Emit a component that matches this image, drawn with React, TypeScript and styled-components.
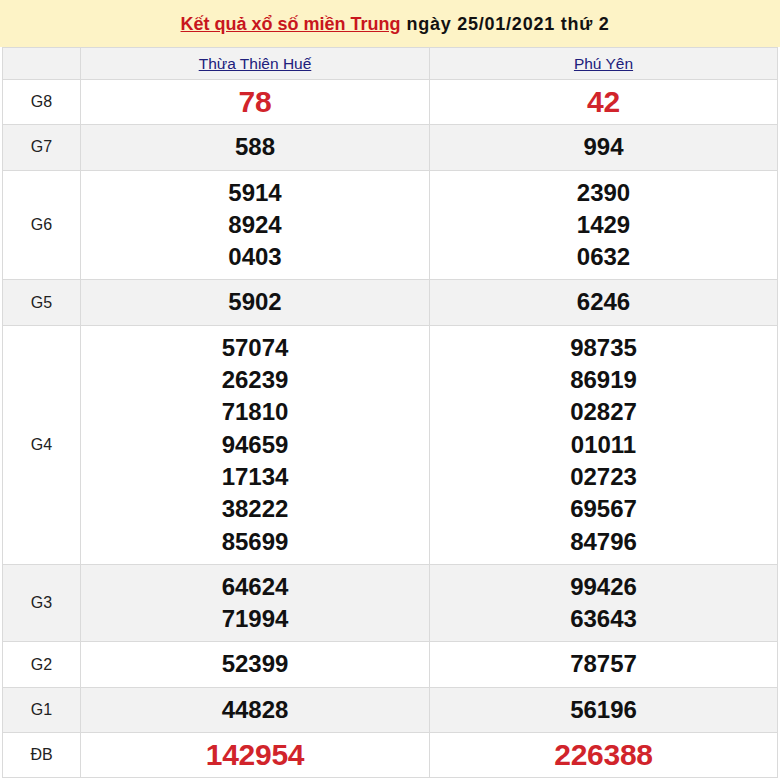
import React from "react";
import styled, { createGlobalStyle } from "styled-components";

const Global = createGlobalStyle`
  html, body { margin: 0; padding: 0; background: #ffffff; }
  body { font-family: "Liberation Sans", Arial, sans-serif; }
`;

const Page = styled.div`
  width: 780px;
  display: flex;
  flex-direction: column;
`;

const TitleBar = styled.div`
  height: 47px;
  background: #fdf3c6;
  display: flex;
  align-items: center;
  justify-content: center;
  font-size: 18px;
  font-weight: bold;
  color: #111;
  padding-top: 1px;
  padding-left: 10px;
  box-sizing: border-box;
`;

const TitleLink = styled.a`
  color: #c8161d;
  text-decoration: underline;
  margin-right: 6px;
`;

const TitleDate = styled.span`
  letter-spacing: 0.75px;
`;

const TableWrap = styled.div`
  padding: 0 2px 0 2px;
`;

const Table = styled.table`
  width: 100%;
  border-collapse: collapse;
  table-layout: fixed;
  border: 1px solid #d6d6d6;
`;

const Row = styled.tr<{ $shade: boolean }>`
  background: ${(p) => (p.$shade ? "#f2f2f2" : "#ffffff")};
`;

const HeadCell = styled.th`
  height: 31px;
  border: 1px solid #dadada;
  font-weight: normal;
  padding: 0;
  text-align: center;
  vertical-align: middle;
`;

const ProvinceLink = styled.a`
  color: #20207c;
  font-size: 15.5px;
  text-decoration: underline;
`;

const Label = styled.td`
  border: 1px solid #dadada;
  text-align: center;
  vertical-align: middle;
  font-size: 16px;
  color: #222;
  padding: 0;
`;

const NumCell = styled.td`
  border: 1px solid #dadada;
  text-align: center;
  vertical-align: middle;
  padding: 6px 0 6px 0;
`;

const Num = styled.div<{ $big?: boolean }>`
  font-weight: bold;
  line-height: 32.3px;
  font-size: ${(p) => (p.$big ? "30px" : "24px")};
  color: ${(p) => (p.$big ? "#d1242b" : "#111")};
  letter-spacing: ${(p) => (p.$big ? "-0.3px" : "0")};
`;

type Prize = { label: string; a: string[]; b: string[]; big?: boolean };

const prizes: Prize[] = [
  { label: "G8", a: ["78"], b: ["42"], big: true },
  { label: "G7", a: ["588"], b: ["994"] },
  { label: "G6", a: ["5914", "8924", "0403"], b: ["2390", "1429", "0632"] },
  { label: "G5", a: ["5902"], b: ["6246"] },
  {
    label: "G4",
    a: ["57074", "26239", "71810", "94659", "17134", "38222", "85699"],
    b: ["98735", "86919", "02827", "01011", "02723", "69567", "84796"],
  },
  { label: "G3", a: ["64624", "71994"], b: ["99426", "63643"] },
  { label: "G2", a: ["52399"], b: ["78757"] },
  { label: "G1", a: ["44828"], b: ["56196"] },
  { label: "ĐB", a: ["142954"], b: ["226388"], big: true },
];

export default function App() {
  return (
    <Page>
      <Global />
      <TitleBar>
        <TitleLink href="#">Kết quả xổ số miền Trung</TitleLink>
        <TitleDate>ngày 25/01/2021 thứ 2</TitleDate>
      </TitleBar>
      <TableWrap>
        <Table>
          <colgroup>
            <col style={{ width: 78 }} />
            <col style={{ width: 349 }} />
            <col />
          </colgroup>
          <thead>
            <Row $shade>
              <HeadCell />
              <HeadCell>
                <ProvinceLink href="#">Thừa Thiên Huế</ProvinceLink>
              </HeadCell>
              <HeadCell>
                <ProvinceLink href="#">Phú Yên</ProvinceLink>
              </HeadCell>
            </Row>
          </thead>
          <tbody>
            {prizes.map((p, i) => (
              <Row key={p.label} $shade={i % 2 === 1}>
                <Label>{p.label}</Label>
                <NumCell>
                  {p.a.map((n) => (
                    <Num key={n} $big={p.big}>
                      {n}
                    </Num>
                  ))}
                </NumCell>
                <NumCell>
                  {p.b.map((n) => (
                    <Num key={n} $big={p.big}>
                      {n}
                    </Num>
                  ))}
                </NumCell>
              </Row>
            ))}
          </tbody>
        </Table>
      </TableWrap>
    </Page>
  );
}
